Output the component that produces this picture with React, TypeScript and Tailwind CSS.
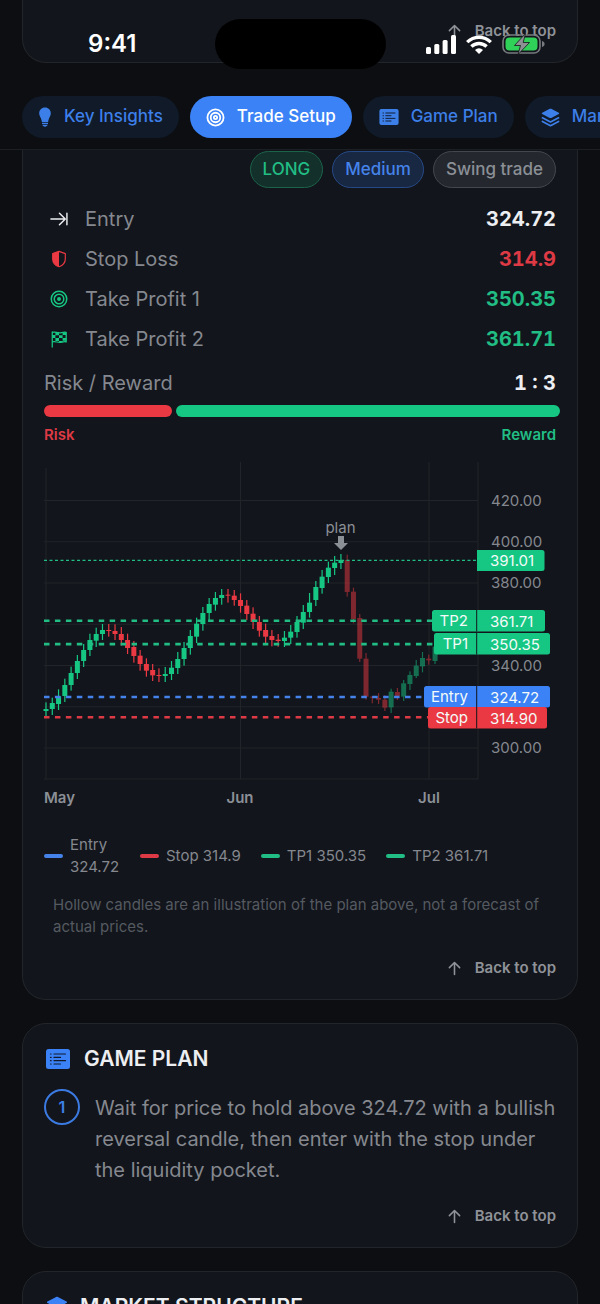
import type { ReactNode } from 'react';

type IconProps = { className?: string };

// Icons
const BulbIcon = ({ className }: IconProps) => (
  <svg viewBox="3 0 14 20" className={className} fill="currentColor" aria-hidden="true">
    <path d="M10 0.6c-3.4 0-5.8 2.5-5.8 5.6 0 2 .9 3.300 1.600 4.700.6 1.200.9 2.600 1.100 4.100h6.200c.2-1.500.5-2.900 1.100-4.100.7-1.400 1.600-2.700 1.600-4.700 0-3.100-2.400-5.600-5.800-5.600z" />
    <path d="M7 15.800h6v1.300H7zM7.300 17.800h5.400c-.3 1.100-1.300 1.900-2.700 1.900s-2.400-.8-2.700-1.900z" />
  </svg>
);

const TargetIcon = ({ className }: IconProps) => (
  <svg viewBox="0 0 20 20" className={className} fill="none" stroke="currentColor" strokeWidth="1.7" aria-hidden="true">
    <circle cx="10" cy="10" r="8.6" />
    <circle cx="10" cy="10" r="5.300" />
    <circle cx="10" cy="10" r="2.200" fill="currentColor" stroke="none" />
  </svg>
);

const TargetRingIcon = ({ className }: IconProps) => (
  <svg viewBox="0 0 20 20" className={className} fill="none" stroke="currentColor" strokeWidth="1.900" aria-hidden="true">
    <circle cx="10" cy="10" r="8.500" />
    <circle cx="10" cy="10" r="5" />
    <circle cx="10" cy="10" r="1.700" />
  </svg>
);

const ListIcon = ({ className }: IconProps) => (
  <svg viewBox="0 0 24 20" className={className} aria-hidden="true">
    <rect width="24" height="20" rx="2.500" fill="currentColor" />
    <g stroke="#101a2a" strokeWidth="1.200" strokeLinecap="round">
      <path d="M4.500 5h.6M4.500 8.400h.6M4.500 11.700h.6M4.500 15h.6" />
      <path d="M8 5h11.500M8 8.400h6.500M8 11.700h11.500M8 15h6.500" />
    </g>
  </svg>
);

const LayersIcon = ({ className }: IconProps) => (
  <svg viewBox="0 0 20 20" className={className} fill="currentColor" aria-hidden="true">
    <path d="M9.200.9 1.300 5c-.6.300-.6 1 0 1.300l7.900 4.100c.5.300 1.100.300 1.600 0l7.900-4.100c.6-.3.6-1 0-1.300L10.800.9c-.5-.3-1.100-.3-1.600 0z" />
    <path d="M1.500 10.300 10 14.700l8.500-4.400M1.500 14.200l8.500 4.400 8.500-4.400" fill="none" stroke="currentColor" strokeWidth="1.800" strokeLinecap="round" strokeLinejoin="round" />
  </svg>
);

const EntryIcon = ({ className }: IconProps) => (
  <svg viewBox="0 0 20 20" className={className} fill="none" stroke="currentColor" strokeWidth="1.600" strokeLinecap="round" strokeLinejoin="round" aria-hidden="true">
    <path d="M1 10h16M10.500 3.500 17 10l-6.500 6.500M18.800 3.500v13" />
  </svg>
);

const ShieldIcon = ({ className }: IconProps) => (
  <svg viewBox="0 0 20 20" className={className} aria-hidden="true">
    <path d="M10 1.500 3 4v6c0 4.200 3 7.200 7 8.600 4-1.400 7-4.400 7-8.600V4z" fill="none" stroke="currentColor" strokeWidth="1.300" strokeLinejoin="round" />
    <path d="M10 1.500 3 4v6c0 4.200 3 7.200 7 8.600z" fill="currentColor" />
  </svg>
);

const FlagIcon = ({ className }: IconProps) => (
  <svg viewBox="0 0 20 20" className={className} aria-hidden="true">
    <path d="M2.500 19V2M2.500 2.700c3-1.500 5 .8 8 .5 2.500-.2 4-1.200 7.500-.7v10.700c-3-.6-4.500.4-7 .6-3 .3-5-1.800-8.500-.6" fill="none" stroke="currentColor" strokeWidth="1.400" strokeLinecap="round" strokeLinejoin="round" />
    <path d="M6 2.500h4v3.200H6zM14 2.500h4v3H14zM2.500 5.500H6V9H2.500zM10 5.800h4V9h-4zM6 9h4v3.300H6zM14 8.800h4V12h-4zM10 12.200h4v1.500h-4z" fill="currentColor" />
  </svg>
);

const ArrowUpIcon = ({ className }: IconProps) => (
  <svg viewBox="0 0 14 16" className={className} fill="none" stroke="currentColor" strokeWidth="1.700" strokeLinecap="round" strokeLinejoin="round" aria-hidden="true">
    <path d="M7 14.500V1.800M1.500 7 7 1.500 12.500 7" />
  </svg>
);

const tabs = [
  { label: 'Key Insights', icon: BulbIcon, iconSize: 'h-5 w-[14px]' },
  { label: 'Trade Setup', icon: TargetRingIcon, iconSize: 'h-[19px] w-[19px]', active: true },
  { label: 'Game Plan', icon: ListIcon, iconSize: 'h-4 w-5' },
  { label: 'Market Structure', icon: LayersIcon, iconSize: 'h-[19px] w-[19px]' },
];

const levels = [
  { label: 'Entry', value: '324.72', icon: EntryIcon, iconColor: 'text-[#eceef1]', color: 'text-[#eceef1]' },
  { label: 'Stop Loss', value: '314.9', icon: ShieldIcon, iconColor: 'text-[#ea3943]', color: 'text-[#dd3a45]' },
  { label: 'Take Profit 1', value: '350.35', icon: TargetIcon, iconColor: 'text-[#16c784]', color: 'text-[#21bd84]' },
  { label: 'Take Profit 2', value: '361.71', icon: FlagIcon, iconColor: 'text-[#16c784]', color: 'text-[#21bd84]' },
];

const legend = [
  { label: 'Entry 324.72', color: 'bg-[#4583ea]', width: 'w-[50px]' },
  { label: 'Stop 314.9', color: 'bg-[#dd3a45]', width: '' },
  { label: 'TP1 350.35', color: 'bg-[#21bd84]', width: '' },
  { label: 'TP2 361.71', color: 'bg-[#21bd84]', width: '' },
];

// [direction, body top, body bottom, wick top, wick bottom], in thirds of a chart unit
const candles: [string, number, number, number, number][] = [
  ['up', 777, 783, 757, 798], ['up', 759, 777, 743, 795], ['up', 739, 762, 718, 780],
  ['up', 705, 738, 686, 756], ['up', 669, 705, 650, 722], ['up', 633, 669, 615, 687],
  ['up', 600, 633, 582, 651], ['up', 570, 600, 551, 618], ['up', 552, 572, 533, 591],
  ['up', 540, 552, 522, 570], ['down', 540, 543, 522, 560], ['down', 543, 552, 523, 570],
  ['down', 552, 570, 531, 587], ['down', 570, 594, 551, 612], ['down', 591, 618, 573, 638],
  ['down', 617, 642, 600, 662], ['down', 642, 662, 625, 680], ['down', 660, 676, 642, 693],
  ['down', 675, 678, 655, 696], ['up', 672, 678, 651, 696], ['up', 653, 672, 633, 690],
  ['up', 627, 654, 606, 672], ['up', 594, 627, 576, 647], ['up', 558, 594, 540, 614],
  ['up', 521, 560, 503, 579], ['up', 489, 522, 471, 542], ['up', 462, 489, 444, 515],
  ['up', 444, 464, 426, 482], ['up', 435, 444, 417, 464], ['down', 434, 437, 417, 458],
  ['down', 437, 450, 420, 467], ['down', 450, 468, 430, 488], ['down', 467, 492, 450, 510],
  ['down', 491, 516, 472, 537], ['down', 516, 542, 498, 560], ['down', 540, 560, 521, 579],
  ['down', 558, 570, 540, 589], ['down', 569, 573, 552, 590], ['up', 563, 573, 543, 591],
  ['up', 545, 563, 525, 582], ['up', 516, 546, 498, 563], ['up', 486, 518, 465, 537],
  ['up', 458, 486, 429, 503], ['up', 411, 450, 393, 468], ['up', 380, 414, 360, 431],
  ['up', 353, 381, 335, 399], ['up', 338, 354, 318, 375], ['up', 330, 339, 312, 357],
  ['down', 330, 426, 314, 440], ['down', 425, 507, 413, 520], ['down', 504, 626, 492, 636],
  ['down', 626, 740, 609, 749], ['down', 740, 743, 738, 760], ['down', 744, 749, 729, 762],
  ['down', 749, 773, 736, 783], ['up', 725, 772, 716, 789], ['down', 726, 738, 714, 750],
  ['up', 700, 740, 690, 753], ['up', 675, 702, 664, 720], ['up', 647, 678, 630, 684],
  ['up', 624, 649, 606, 667], ['down', 626, 631, 614, 644], ['up', 590, 633, 575, 642],
];

const PLAN_START = 48;
const priceToY = (price: number) => 40.5 + (420 - price) * 2.0625;
const candleX = (index: number) => 2 + index * 6.275;

const priceTags = [
  { name: 'TP2', value: '361.71', y: 150, left: 388, right: 501, line: 361.71, color: '#16c784', stroke: '#21bd84' },
  { name: 'TP1', value: '350.35', y: 173, left: 390, right: 506, line: 350.35, color: '#16c784', stroke: '#21bd84' },
  { name: 'Entry', value: '324.72', y: 226, left: 380, right: 506, line: 324.72, color: '#3b82f6', stroke: '#4583ea' },
  { name: 'Stop', value: '314.90', y: 247, left: 384, right: 503, line: 314.9, color: '#ea3943', stroke: '#dd3a45' },
];

const PriceChart = () => (
  <svg viewBox="0 0 512 350" className="mt-[15px] block w-full overflow-visible" role="img" aria-label="Price chart with trade levels">
    {/* Grid */}
    <g stroke="#212429" strokeWidth="1">
      {[420, 400, 380, 360, 340, 320, 300].map((price) => (
        <line key={price} x1="0" x2="434" y1={priceToY(price)} y2={priceToY(price)} />
      ))}
      <line x1="0" x2="434" y1="319" y2="319" />
      <line x1="2" x2="2" y1="8" y2="319" />
      <line x1="196.500" x2="196.500" y1="2" y2="319" />
      <line x1="385" x2="385" y1="2" y2="319" />
      <line x1="434" x2="434" y1="2" y2="319" />
    </g>

    {/* Candles */}
    {candles.map(([direction, top, bottom, high, low], i) => (
      <g key={i} fill={direction === 'up' ? '#16c784' : '#ea3943'} opacity={i >= PLAN_START ? 0.5 : 1}>
        <rect x={candleX(i) - 0.6} y={high / 3 - 10} width="1.2" height={(low - high) / 3} />
        <rect x={candleX(i) - 2.5} y={top / 3 - 10} width="5" height={(bottom - top) / 3} />
      </g>
    ))}

    {/* Levels */}
    <line x1="0" x2="434" y1={priceToY(391.01)} y2={priceToY(391.01)} stroke="#21bd84" strokeWidth="1.3" strokeDasharray="3 2.5" />
    {priceTags.map((tag) => (
      <line key={tag.name} x1="0" x2={tag.left} y1={priceToY(tag.line)} y2={priceToY(tag.line)} stroke={tag.stroke} strokeWidth="2.6" strokeDasharray="5.5 5.44" />
    ))}

    <text x="296.500" y="73" textAnchor="middle" fontSize="15" fill="#8b8f96">plan</text>
    <path d="M294 76h6v7h4l-7 7-7-7h4z" fill="#8b8f96" />

    {/* Price axis */}
    <g fontSize="15" fill="#85888f">
      {[420, 400, 380, 340, 300].map((price) => (
        <text key={price} x="447" y={priceToY(price) + 5}>{price.toFixed(2)}</text>
      ))}
    </g>
    <g fontSize="15" fill="#f4fbf8">
      <path d="M433 90h65a2.500 2.500 0 0 1 2.500 2.500v16a2.500 2.500 0 0 1-2.500 2.500h-65z" fill="#16c784" />
      <text x="446" y="106">391.01</text>
      {priceTags.map((tag) => (
        <g key={tag.name}>
          <rect x={tag.left} y={tag.y} width={tag.right - tag.left} height="21.500" rx="2.500" fill={tag.color} />
          <line x1="432.700" x2="432.700" y1={tag.y} y2={tag.y + 21.5} stroke="#12151b" strokeWidth="1" />
          <text x="424" y={tag.y + 16} textAnchor="end">{tag.name}</text>
          <text x="446" y={tag.y + 17}>{tag.value}</text>
        </g>
      ))}
    </g>

    {/* Months */}
    <g fontSize="15" fontWeight="600" fill="#8b8f96">
      <text x="0" y="343">May</text>
      <text x="196" y="343" textAnchor="middle">Jun</text>
      <text x="385" y="343" textAnchor="middle">Jul</text>
    </g>
  </svg>
);

const BackToTop = ({ className = '' }: { className?: string }) => (
  <div className={`flex justify-end ${className}`}>
    <a href="#top" className="flex items-center gap-[14px] text-[15px] leading-5 font-semibold text-[#8f9298]">
      <ArrowUpIcon className="h-[15px] w-[13px]" />
      Back to top
    </a>
  </div>
);

const Card = ({ children, className = '' }: { children: ReactNode; className?: string }) => (
  <section className={`mx-[22px] border border-[#22262b] bg-[#12151b] px-[21px] pb-[21px] ${className}`}>
    {children}
  </section>
);

const StatusBar = () => (
  <div className="absolute inset-x-0 top-[19px] grid h-[50px] grid-cols-[1fr_171px_1fr] items-center text-white">
    <div className="flex justify-center pl-[10px] text-2xl font-semibold">9:41</div>
    <div className="h-full rounded-full bg-black" />
    <div className="flex items-center justify-center gap-[10px] pr-[14px]">
      <svg viewBox="0 0 30 19" className="h-[19px] w-[30px]" fill="currentColor" aria-hidden="true">
        <rect x="0" y="12" width="5" height="7" rx="1.500" />
        <rect x="8.300" y="9" width="5" height="10" rx="1.500" />
        <rect x="16.600" y="5" width="5" height="14" rx="1.500" />
        <rect x="25" y="0" width="5" height="19" rx="1.500" />
      </svg>
      <svg viewBox="0 0 26 19" className="h-[19px] w-[26px]" fill="none" stroke="currentColor" strokeWidth="3.400" aria-hidden="true">
        <path d="M1.200 7.100a17 17 0 0 1 23.600 0M5.400 11.600a11 11 0 0 1 15.200 0" />
        <path d="M13 19l-4-4.100a5.800 5.800 0 0 1 8 0z" fill="currentColor" stroke="none" />
      </svg>
      <svg viewBox="0 0 43 22" className="h-[22px] w-[43px]" aria-hidden="true">
        <rect x="1" y="2" width="37" height="18" rx="6" fill="none" stroke="#777a7e" strokeWidth="1.600" />
        <rect x="3.500" y="4.500" width="32" height="13" rx="4" fill="#30d158" />
        <path d="M40 8v6c1.800-.5 2.600-1.600 2.600-3S41.800 8.500 40 8z" fill="#777a7e" />
        <path d="M23.500.5 12.500 12.500h6L16 21.500 27.500 9.500h-6.300z" fill="#8e9194" stroke="#12151b" strokeWidth=".8" />
      </svg>
    </div>
  </div>
);

const SectionTitle = ({ icon, children }: { icon: ReactNode; children: ReactNode }) => (
  <h2 className="flex items-center pl-0.5 text-[21px] leading-7 font-semibold text-[#eceef1]">
    {icon}
    {children}
  </h2>
);

export default function App() {
  return (
    <div id="top" className="h-screen overflow-hidden bg-[#0c0e11] font-['Inter',sans-serif]">
      <header className="relative border-b border-[#1c1f23]">
        <Card className="rounded-b-3xl border-t-0">
          <BackToTop className="pt-[21px]" />
        </Card>
        <StatusBar />
        <nav className="mt-[33px] flex gap-[11px] overflow-hidden pb-[11px] pl-[22px]">
          {tabs.map(({ label, icon: Icon, iconSize, active }) => (
            <button
              key={label}
              type="button"
              className={`flex h-[42px] shrink-0 items-center gap-3 rounded-full px-4 text-[17px] font-medium ${
                active ? 'bg-[#3b82f6] text-white' : 'bg-[#101a28] text-[#3d7fe8]'
              }`}
            >
              <Icon className={iconSize} />
              {label}
            </button>
          ))}
        </nav>
      </header>

      <Card className="rounded-b-3xl border-t-0">
        <div className="flex justify-end gap-[9px] pt-px text-[17px] font-medium">
          <span className="flex h-[37px] items-center rounded-full border border-[#1b6349] bg-[#14302b] px-3 text-[#21bd84]">LONG</span>
          <span className="flex h-[37px] items-center rounded-full border border-[#264a86] bg-[#182742] px-3 text-[#4583ea]">Medium</span>
          <span className="flex h-[37px] items-center rounded-full border border-[#44474c] bg-[#24282e] px-3 text-[#8b8f96]">Swing trade</span>
        </div>

        <dl className="mt-[11px]">
          {levels.map(({ label, value, icon: Icon, iconColor, color }) => (
            <div key={label} className="flex h-10 items-center justify-between text-xl">
              <dt className="flex items-center gap-[17px] pl-1.5 text-[#85888f]">
                <Icon className={`h-[18px] w-[18px] ${iconColor}`} />
                {label}
              </dt>
              <dd className={`font-bold tabular-nums ${color}`}>{value}</dd>
            </div>
          ))}
        </dl>

        <div className="mt-[10px] flex justify-between text-xl leading-7">
          <span className="text-[#85888f]">Risk / Reward</span>
          <span className="font-bold tabular-nums text-[#eceef1]">1 : 3</span>
        </div>
        <div className="mt-2 flex gap-1">
          <div className="h-3 w-1/4 shrink-0 rounded-full bg-[#ea3943]" />
          <div className="h-3 w-3/4 shrink-0 rounded-full bg-[#16c784]" />
        </div>
        <div className="mt-2 flex justify-between text-[15px] leading-5 font-semibold">
          <span className="text-[#dd3a45]">Risk</span>
          <span className="text-[#21bd84]">Reward</span>
        </div>

        <PriceChart />

        <ul className="mt-6 flex items-center gap-5 text-[15px] leading-[22px] text-[#85888f]">
          {legend.map((item) => (
            <li key={item.label} className="flex items-center gap-[7px]">
              <span className={`h-1 w-[19px] shrink-0 rounded-full ${item.color}`} />
              <span className={item.width}>{item.label}</span>
            </li>
          ))}
        </ul>
        <p className="mt-4 px-[9px] text-[15px] leading-[22px] text-[#555a61]">
          Hollow candles are an illustration of the plan above, not a forecast of actual prices.
        </p>
        <BackToTop className="mt-5" />
      </Card>

      <Card className="mt-[23px] rounded-3xl pt-[21px]">
        <SectionTitle icon={<ListIcon className="mr-[14px] h-5 w-6 text-[#3b82f6]" />}>GAME PLAN</SectionTitle>
        <ol className="mt-4">
          <li className="flex gap-[15px]">
            <span className="flex h-9 w-9 shrink-0 items-center justify-center rounded-full border-2 border-[#3b7ae0] text-base font-semibold text-[#3d7fe8]">
              1
            </span>
            <p className="pt-1 text-xl leading-[31px] text-[#85888f]">
              Wait for price to hold above 324.72 with a bullish reversal candle, then enter with the stop under the liquidity pocket.
            </p>
          </li>
        </ol>
        <BackToTop className="mt-5" />
      </Card>

      <Card className="mt-[23px] rounded-3xl pt-[21px]">
        <SectionTitle icon={<LayersIcon className="mr-3 h-6 w-[22px] text-[#3b82f6]" />}>MARKET STRUCTURE</SectionTitle>
      </Card>
    </div>
  );
}
